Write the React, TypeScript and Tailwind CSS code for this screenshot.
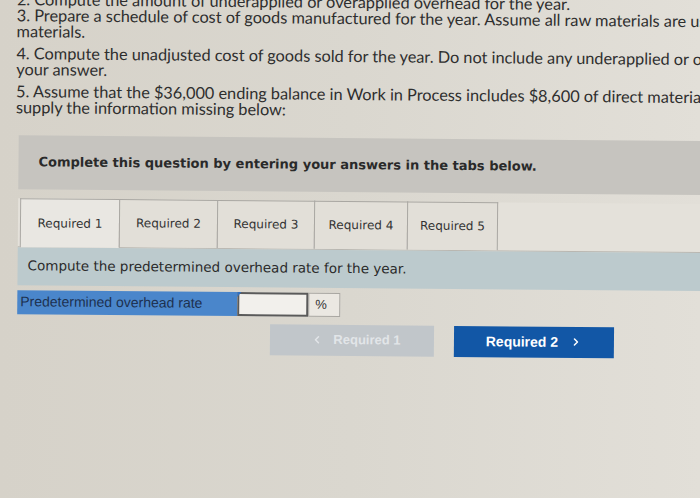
import React from 'react';
import { ChevronLeft, ChevronRight } from 'lucide-react';
import { clsx } from 'clsx';

const tabs = ['Required 1', 'Required 2', 'Required 3', 'Required 4', 'Required 5'];
const tabWidths = ['w-[100px]', 'w-[99px]', 'w-[98px]', 'w-[94px]', 'w-[91px]'];

export default function App() {
    const active = 0;

    return (
        <div className="w-[700px] h-[498px] overflow-hidden bg-gradient-to-r from-[#d6d2c9] via-[#dad7cf] to-[#e2dfd8]">
            <div className="w-[900px] origin-top-left rotate-[0.5deg]">
                {/* Question list */}
                <div className="pl-[17px] font-['Lato',sans-serif] text-[16.3px] leading-[16.5px] text-[#2e2e2e] whitespace-nowrap flex flex-col gap-[5px] -mt-[9px]">
                    <p className="-mb-[6px]">2. Compute the amount of underapplied or overapplied overhead for the year.</p>
                    <p>
                        <span className="block">3. Prepare a schedule of cost of goods manufactured for the year. Assume all raw materials are used as direct</span>
                        <span className="block">materials.</span>
                    </p>
                    <p>
                        <span className="block">4. Compute the unadjusted cost of goods sold for the year. Do not include any underapplied or overapplied overhead in</span>
                        <span className="block">your answer.</span>
                    </p>
                    <p>
                        <span className="block">5. Assume that the $36,000 ending balance in Work in Process includes $8,600 of direct materials. Given this assumption,</span>
                        <span className="block">supply the information missing below:</span>
                    </p>
                </div>

                {/* Instructions banner */}
                <div className="ml-[20px] mt-[19px] h-[54px] bg-[#c6c4bf] flex items-center pl-[20px]">
                    <span className="font-['DejaVu_Sans',Verdana,sans-serif] font-bold text-[13px] text-[#2a2a2a]">
                        Complete this question by entering your answers in the tabs below.
                    </span>
                </div>

                {/* Tabs */}
                <div className="ml-[20px] mt-[9px] flex items-end bg-[#e4e1da] border-b border-[#b9b7b1] pl-[2px]">
                    {tabs.map((t, i) => (
                        <div
                            key={t}
                            className={clsx(
                                'h-[48px] flex items-center justify-center border border-b-0 border-[#a9a7a2] font-[\'DejaVu_Sans\',Verdana,sans-serif] text-[12px] text-[#333] -mr-px',
                                tabWidths[i],
                                i === active ? 'bg-[#e9e7e2] -mb-px h-[49px]' : 'bg-[#e2dfd8]'
                            )}
                        >
                            {t}
                        </div>
                    ))}
                </div>

                {/* Current requirement */}
                <div className="ml-[20px] h-[38px] bg-[#bccacd] flex items-center pl-[10px]">
                    <span className="font-['DejaVu_Sans',Verdana,sans-serif] text-[13.5px] text-[#2b2b2b]">
                        Compute the predetermined overhead rate for the year.
                    </span>
                </div>

                {/* Answer row */}
                <div className="ml-[20px] mt-[5px] flex h-[24px]">
                    <div className="w-[220px] bg-[#4a86cb] flex items-center pl-[3px] font-['Liberation_Sans',Arial,sans-serif] text-[14px] text-[#1d3150]">
                        Predetermined overhead rate
                    </div>
                    <div className="relative w-[71px] bg-[#f2f0ec] border-2 border-[#5a5a5a]">
                        <span className="absolute -left-[2px] -top-[2px] w-0 h-0 border-t-[5px] border-r-[4px] border-t-[#2f6fc0] border-r-transparent" />
                    </div>
                    <div className="w-[32px] bg-[#ebe8e2] border border-[#a9a7a2] flex items-center pl-[6px] font-['Liberation_Sans',Arial,sans-serif] text-[13px] text-[#333]">
                        %
                    </div>
                </div>

                {/* Navigation */}
                <div className="ml-[273px] mt-[8px] flex gap-[20px]">
                    <button className="w-[164px] h-[31px] bg-[#c1c6ca] flex items-center justify-center gap-[10px] pl-[8px] font-['Liberation_Sans',Arial,sans-serif] font-bold text-[13px] text-[#e2e5e8]">
                        <ChevronLeft className="w-[12px] h-[12px]" strokeWidth={3} />
                        Required 1
                    </button>
                    <button className="w-[160px] h-[31px] bg-[#1257a6] flex items-center justify-center gap-[12px] font-['Liberation_Sans',Arial,sans-serif] font-bold text-[14px] text-white">
                        Required 2
                        <ChevronRight className="w-[12px] h-[12px]" strokeWidth={3} />
                    </button>
                </div>
            </div>
        </div>
    );
}
